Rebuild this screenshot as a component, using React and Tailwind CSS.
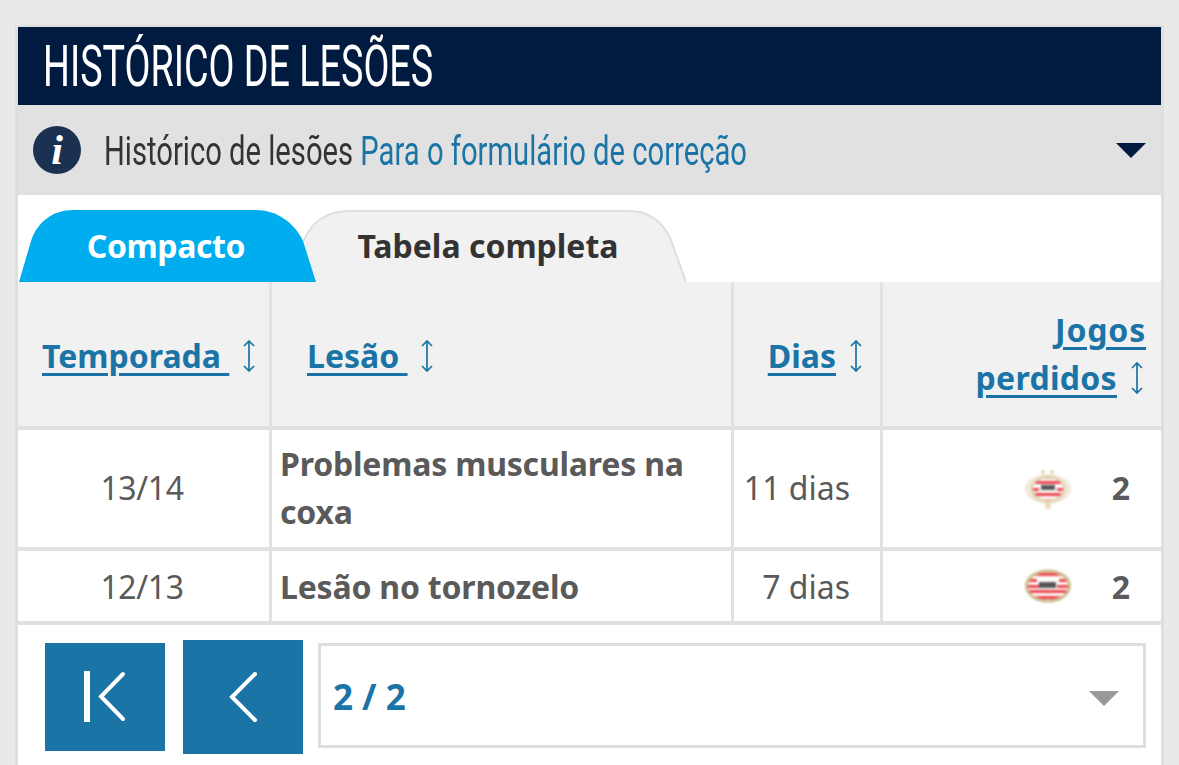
const bodyFont = "font-['Noto_Sans',sans-serif]";
const titleFont = "font-['Roboto','Liberation_Sans',sans-serif]";

function SortIcon({ className }) {
  return (
    <svg width="14" height="32" viewBox="0 0 14 32" fill="none" stroke="#1b74a6" strokeWidth="1.700" className={className}>
      <path d="M7 1v30M2 6 7 1l5 5M2 26l5 5 5-5" />
    </svg>
  );
}

function Badge({ faded }) {
  const clipId = faded ? "psv-faded" : "psv-full";
  const rx = faded ? 15 : 20;
  const ry = faded ? 10.500 : 13.500;
  return (
    <svg width="50" height="44" viewBox="0 0 50 44" className="shrink-0">
      <defs>
        <clipPath id={clipId}>
          <ellipse cx="25" cy="22" rx={rx} ry={ry} />
        </clipPath>
      </defs>
      <g style={{ filter: "blur(1px)" }}>
        {faded && (
          <g fill="#d9c79c">
            <circle cx="20" cy="5" r="1.800" />
            <circle cx="29" cy="5" r="1.800" />
            <rect x="22" y="36" width="6" height="6" opacity="0.6" />
            <ellipse cx="25" cy="22" rx="23" ry="15" opacity="0.4" />
            <ellipse cx="25" cy="22" rx="19" ry="13" fill="#fff" opacity="0.5" />
          </g>
        )}
        <ellipse cx="25" cy="22" rx={rx + 3} ry={ry + 3} fill="#cdb98a" opacity={faded ? 0.55 : 1} />
        <ellipse cx="25" cy="22" rx={rx} ry={ry} fill="#fff" />
        <g clipPath={`url(#${clipId})`} fill="#e9434b">
          <rect x="0" y="9" width="50" height="3" />
          <rect x="0" y={faded ? 14 : 15} width={faded ? 50 : 14} height="3" />
          <rect x={faded ? 0 : 36} y={faded ? 14 : 15} width="50" height="3" />
          <rect x="0" y="21" width="16" height="3" />
          <rect x="34" y="21" width="16" height="3" />
          <rect x="0" y="26" width="50" height="3" />
          <rect x="0" y="32" width="50" height="3" />
        </g>
        <rect x={faded ? 18 : 16} y="18" width={faded ? 14 : 17} height={faded ? 5 : 6} fill="#555" />
      </g>
    </svg>
  );
}

function HeadLink({ children, className }) {
  return <a className={`text-[#1b74a6] underline underline-offset-[5px] decoration-[3px] font-bold ${className || ""}`}>{children}</a>;
}

function BodyRow({ season, injury, days, badgeFaded, games, height, textShift }) {
  return (
    <div className={`grid grid-cols-[254px_462px_149px_278px] bg-white text-[#5a5a5a] text-[32px] ${height}`}>
      <div className={`border-r-[3px] border-b-[4px] border-[#e1e1e1] flex items-center justify-center tracking-[-0.4px] pr-[3px] ${textShift}`}>{season}</div>
      <div className={`border-r-[3px] border-b-[4px] border-[#e1e1e1] flex items-center pl-[8px] pr-2 font-bold leading-[48px] tracking-[-0.2px] ${textShift}`}>{injury}</div>
      <div className={`border-r-[3px] border-b-[4px] border-[#e1e1e1] flex items-center justify-end pr-[30px] ${textShift}`}>{days}</div>
      <div className="border-b-[4px] border-[#e1e1e1] flex items-center justify-end pr-[31px] gap-[39px]">
        <Badge faded={badgeFaded} />
        <span className={`font-bold ${textShift}`}>{games}</span>
      </div>
    </div>
  );
}

export default function App() {
  return (
    <div className={`h-[765px] overflow-hidden bg-[#e9e9e9] pt-[25px] pl-[15px] pr-[15px] ${bodyFont}`}>
      <div className="h-[800px] bg-white border-x-[3px] border-t-[2px] border-[#dedede]">
        {/* Título */}
        <div className={`h-[78px] bg-[#001a40] text-white pl-[25px] flex items-center text-[58px] whitespace-nowrap ${titleFont}`}>
          <span className="origin-left scale-x-[0.65] pt-[1px]">HISTÓRICO DE LESÕES</span>
        </div>

        {/* Barra de info */}
        <div className="h-[90px] bg-[#e1e1e1] flex items-center pl-[15px] pr-[15px]">
          <div className="w-[48px] h-[48px] rounded-full bg-[#1a3152] flex items-center justify-center text-white text-[42px] font-bold italic font-['Liberation_Serif',serif]">
            i
          </div>
          <div className={`ml-[23px] w-[650px] text-[41px] text-[#333] whitespace-nowrap ${titleFont}`}>
            <span className="inline-block origin-left scale-x-[0.712] pt-[4px]">
              Histórico de lesões <a className="text-[#1b74a6]">Para o formulário de correção</a>
            </span>
          </div>
          <div className="ml-auto w-0 h-0 border-x-[15px] border-x-transparent border-t-[15px] border-t-[#001a40]" />
        </div>

        {/* Abas */}
        <div className="h-[87px] pt-[15px] flex bg-white">
          <div className="relative w-[298px] h-[72px] z-10 flex items-center justify-center font-bold text-[32px] text-white tracking-[-0.4px]">
            <svg className="absolute inset-0" width="298" height="72" viewBox="0 0 298 72">
              <path d="M1 72 13 31C19 12 35 0 55 0H238C258 0 276 12 285 31L298 72Z" fill="#00aeef" />
            </svg>
            <span className="relative pr-[2px]">Compacto</span>
          </div>
          <div className="relative w-[384px] h-[72px] -ml-[13px] flex items-center justify-center font-bold text-[32px] text-[#333]">
            <svg className="absolute inset-0" width="384" height="72" viewBox="0 0 384 72">
              <path d="M0 32C8 12 24 1 46 1H326C346 1 360 12 368 30L383 72H0Z" fill="#f1f1f1" />
              <path d="M0 32C8 12 24 1 46 1H326C346 1 360 12 368 30L383 72" fill="none" stroke="#dedede" strokeWidth="2" />
            </svg>
            <span className="relative pr-[14px]">Tabela completa</span>
          </div>
        </div>

        {/* Cabeçalho da tabela */}
        <div className="grid grid-cols-[254px_462px_149px_278px] h-[148px] bg-[#f1f1f1] text-[32px]">
          <div className="border-r-[3px] border-b-[4px] border-[#e1e1e1] flex items-center pl-[24px] pt-[3px] gap-[13px]">
            <HeadLink>Temporada&nbsp;</HeadLink>
            <SortIcon className="shrink-0" />
          </div>
          <div className="border-r-[3px] border-b-[4px] border-[#e1e1e1] flex items-center pl-[35px] pt-[3px] gap-[12px]">
            <HeadLink>Lesão&nbsp;</HeadLink>
            <SortIcon className="shrink-0" />
          </div>
          <div className="border-r-[3px] border-b-[4px] border-[#e1e1e1] flex items-center justify-end pr-[17px] pt-[3px] gap-[13px]">
            <HeadLink>Dias</HeadLink>
            <SortIcon className="shrink-0" />
          </div>
          <div className="border-b-[4px] border-[#e1e1e1] flex flex-col items-end justify-center pr-[15px] leading-[48px]">
            <HeadLink className="tracking-[0.8px]">Jogos</HeadLink>
            <div className="flex items-center gap-[13px] mr-[2px]">
              <HeadLink className="tracking-[0.3px]">perdidos</HeadLink>
              <SortIcon className="shrink-0" />
            </div>
          </div>
        </div>

        <BodyRow season="13/14" injury="Problemas musculares na coxa" days="11 dias" badgeFaded games="2" height="h-[121px]" textShift="pb-[2px]" />
        <BodyRow season="12/13" injury="Lesão no tornozelo" days="7 dias" games="2" height="h-[74px]" textShift="pt-[1px]" />

        {/* Paginação */}
        <div className="flex items-start pl-[27px] pr-[15px] pt-[15px] bg-white">
          <div className="w-[120px] h-[108px] mt-[3px] bg-[#1b74a6] flex items-center justify-center">
            <svg width="42" height="52" viewBox="0 0 42 52" fill="none" stroke="#fff" strokeWidth="4">
              <path d="M3 0v51" strokeWidth="6" />
              <path d="M39 3 17 25.500 39 48" strokeLinecap="round" />
            </svg>
          </div>
          <div className="w-[120px] h-[114px] ml-[18px] bg-[#1b74a6] flex items-center justify-center">
            <svg width="30" height="52" viewBox="0 0 30 52" fill="none" stroke="#fff" strokeWidth="4" strokeLinecap="round">
              <path d="M27 3 4 26l23 23" />
            </svg>
          </div>
          <div className="flex-1 h-[105px] mt-[3px] ml-[15px] border-[3px] border-[#dedede] flex items-center pl-[12px] pr-[24px] font-bold text-[35px] text-[#1b74a6]">
            <span className="pt-[4px]">2 / 2</span>
            <div className="ml-auto mt-[6px] w-0 h-0 border-x-[15px] border-x-transparent border-t-[15px] border-t-[#999]" />
          </div>
        </div>
      </div>
    </div>
  );
}
